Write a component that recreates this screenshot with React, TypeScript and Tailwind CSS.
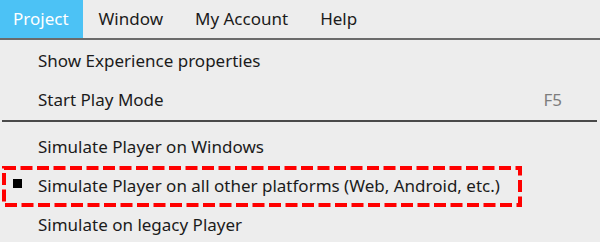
const menuBar = ["Project", "Window", "My Account", "Help"];

type Item = { label: string; shortcut?: string; checked?: boolean; marked?: boolean };

const topItems: Item[] = [
  { label: "Show Experience properties" },
  { label: "Start Play Mode", shortcut: "F5" },
];

const simItems: Item[] = [
  { label: "Simulate Player on Windows" },
  { label: "Simulate Player on all other platforms (Web, Android, etc.)", checked: true, marked: true },
  { label: "Simulate on legacy Player" },
];

const MenuRow = ({ item }: { item: Item }) => (
  <div className="relative flex h-[39px] items-center pl-[38px] pr-[38px]">
    {item.checked && <span className="absolute left-[13px] top-[13px] h-[9px] w-[9px] bg-black" />}
    <span className="flex-1 text-[#1b1b1b]">{item.label}</span>
    {item.shortcut && <span className="text-[#7d7d7d]">{item.shortcut}</span>}
    {item.marked && (
      <svg className="pointer-events-none absolute left-0 top-0" width="600" height="44" viewBox="0 0 600 44">
        <rect
          x="4"
          y="2"
          width="516"
          height="37"
          fill="none"
          stroke="#ff0000"
          strokeWidth="4"
          strokeDasharray="12 4.5"
        />
      </svg>
    )}
  </div>
);

export default function App() {
  return (
    <div
      className="h-[242px] w-[600px] overflow-hidden bg-[#ededed] text-[17px]"
      style={{ fontFamily: '"Noto Sans", "Open Sans", sans-serif' }}
    >
      {/* menu bar */}
      <div className="flex h-[40px] border-b-2 border-[#6b6b6b]">
        {menuBar.map((name, i) => (
          <div
            key={name}
            className={
              i === 0
                ? "flex items-center bg-[#4cc2f5] pl-[13px] pr-[14px] text-white"
                : "flex items-center px-[16px] first-of-type:pl-[15px] text-[#1b1b1b]"
            }
          >
            {name}
          </div>
        ))}
      </div>

      {/* dropdown */}
      <div className="pt-px">
        {topItems.map((item) => (
          <MenuRow key={item.label} item={item} />
        ))}
        <div className="mx-[2px] mt-px mb-[5px] h-[2px] w-[595px] bg-[#4a4a4a]" />
        {simItems.map((item) => (
          <MenuRow key={item.label} item={item} />
        ))}
      </div>
    </div>
  );
}
